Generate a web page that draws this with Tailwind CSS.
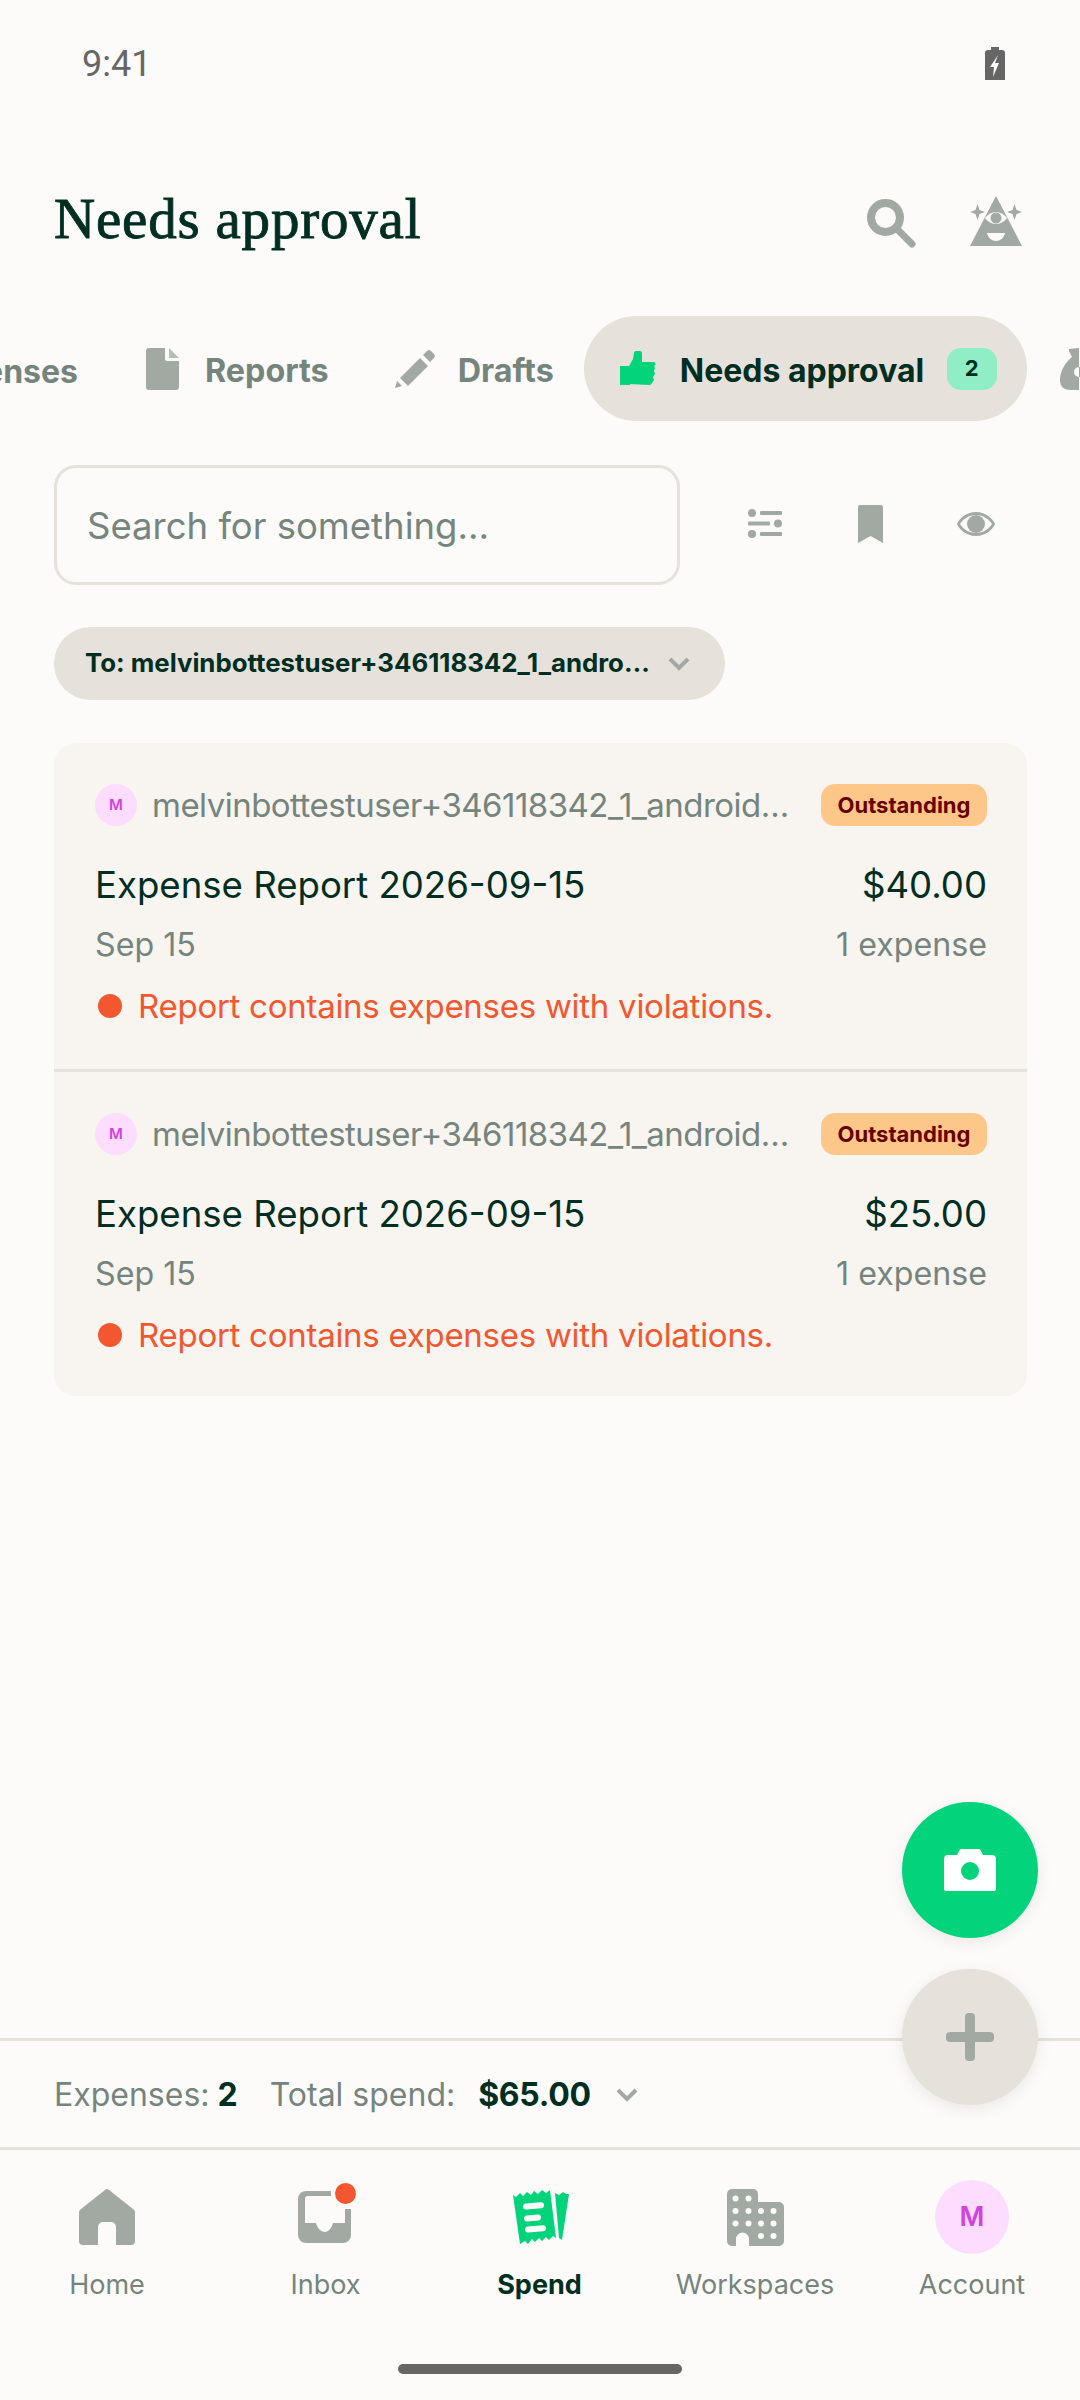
<!DOCTYPE html>
<html lang="en">
<head>
<meta charset="utf-8">
<script src="https://cdn.jsdelivr.net/npm/@tailwindcss/browser@4"></script>
</head>
<body class="bg-[#fcfbf9]">
<div class="relative w-[1080px] h-[2400px] overflow-hidden bg-[#fcfbf9] flex flex-col font-['Inter',sans-serif] text-[#002e22]">

  <!-- status bar -->
  <div class="h-[126px] flex items-start justify-between pl-[82px] pr-[75px] pt-[42px] shrink-0">
    <span class="font-['Roboto',sans-serif] text-[36px] leading-[44px] text-[#666666]">9:41</span>
    <svg class="mt-[5px]" width="20" height="33" viewBox="0 0 20 33"><path d="M6 0h8v3h3a3 3 0 0 1 3 3v27H0V6a3 3 0 0 1 3-3h3z" fill="#666666"/><path d="M13 8 5 20H9L8 30 14 16H10z" fill="#fcfbf9"/></svg>
  </div>

  <!-- header -->
  <div class="h-[190px] shrink-0 flex items-start justify-between pl-[54px] pr-[58px] pt-[62px]">
    <h1 class="font-['Liberation_Serif',serif] font-normal text-[57px] tracking-[0.8px] leading-[62px] text-[#002e22] [-webkit-text-stroke:0.9px_#002e22]">Needs approval</h1>
    <div class="flex items-start gap-[54px] pt-[11px]">
      <svg width="49" height="49" viewBox="0 0 49 49"><circle cx="18.5" cy="18.5" r="14.5" fill="none" stroke="#a2a9a3" stroke-width="8"/><path d="M30 30 45 45" stroke="#a2a9a3" stroke-width="7" stroke-linecap="round"/></svg>
      <svg class="-mt-[3px]" width="52" height="50" viewBox="0 0 52 50"><path d="M26 0 52 50H0z" fill="#a2a9a3"/><path d="M15 22C21 14 31 14 37 22C31 30 21 30 15 22z" fill="#fcfbf9"/><circle cx="26" cy="22" r="5.500" fill="#a2a9a3"/><path d="M17 37h18c-1 5-5 8-9 8s-8-3-9-8z" fill="#fcfbf9"/><path d="M7.500 8 9.500 14 15 16 9.500 18 7.500 24 5.500 18 0 16 5.500 14z" fill="#a2a9a3"/><path d="M44.500 8 46.500 14 52 16 46.500 18 44.500 24 42.500 18 37 16 42.500 14z" fill="#a2a9a3"/></svg>
    </div>
  </div>

  <!-- tabs -->
  <div class="h-[105px] shrink-0 flex items-center relative">
    <div class="absolute left-[-112px] top-[3px] h-[105px] flex items-center text-[#76847e] font-bold text-[32px] whitespace-nowrap">
      <span class="w-[190px] text-right">Expenses</span>
    </div>
    <div class="ml-[146px] flex items-center gap-[26px]">
      <svg width="33" height="42" viewBox="0 0 33 42"><path d="M3 0H19V11a2 2 0 0 0 2 2H33V39a3 3 0 0 1-3 3H3a3 3 0 0 1-3-3V3a3 3 0 0 1 3-3z" fill="#a2a9a3"/><path d="M23 0 33 10H23z" fill="#b6bcb7"/></svg>
      <span class="pt-[4px] font-bold text-[32.300px] leading-[42px] text-[#76847e]">Reports</span>
    </div>
    <div class="ml-[66px] flex items-center gap-[23px]">
      <svg width="40" height="38" viewBox="0 0 40 38"><path d="M5 28 25 8 33 16 13 36z" fill="#a2a9a3"/><path d="M28 5 32 1a3 3 0 0 1 4 0l3 3a3 3 0 0 1 0 4l-4 4z" fill="#a2a9a3"/><path d="M0 38 2 31 7 36z" fill="#a2a9a3"/></svg>
      <span class="pt-[4px] font-bold text-[32.300px] leading-[42px] text-[#76847e]">Drafts</span>
    </div>
    <div class="ml-[30px] h-[105px] w-[443px] shrink-0 rounded-full bg-[#e6e1da] flex items-center pl-[36px]">
      <svg width="36" height="36" viewBox="0 0 36 36"><path d="M0 15H10V34H0z" fill="#03d47c"/><path d="M9 15 13 8 14 2a2.500 2.500 0 0 1 3-2h3a2 2 0 0 1 2 2V11H33a2 2 0 0 1 1 4l1 2-1 3 1 3-2 3 1 3-2 3a3 3 0 0 1-3 2l-20-1z" fill="#03d47c"/></svg>
      <span class="pt-[4px] ml-[24px] w-[245px] font-bold text-[32px] leading-[42px] whitespace-nowrap">Needs approval</span>
      <span class="ml-[22px] w-[50px] h-[42px] rounded-[14px] bg-[#8feec4] flex items-center justify-center font-bold text-[22px]">2</span>
    </div>
    <svg class="ml-[32px] shrink-0" width="44" height="42" viewBox="0 0 44 42"><path fill-rule="evenodd" d="M10 1 20 0V42H12C4 42 1 38 1 32 1 22 7 14 13 9L10 3zM20 19a5 5 0 1 0 0 10 5 5 0 0 0 0-10z" fill="#a2a9a3"/></svg>
  </div>

  <!-- search row -->
  <div class="mt-[44px] shrink-0 flex items-center pl-[54px]">
    <div class="w-[626px] h-[120px] rounded-[22px] border-[3px] border-[#e6e1da] flex items-center pl-[30px] pt-[3px] text-[36.500px] text-[#76847e]">Search for something…</div>
    <div class="ml-[68px] -mt-[3px] flex items-center">
      <svg width="34" height="29" viewBox="0 0 34 29"><g fill="#a2a9a3"><circle cx="4" cy="4" r="4"/><circle cx="30" cy="14.500" r="4"/><circle cx="4" cy="25" r="4"/><rect x="12" y="2" width="22" height="4" rx="1"/><rect x="0" y="12.500" width="22" height="4" rx="1"/><rect x="12" y="23" width="22" height="4" rx="1"/></g></svg>
      <svg class="ml-[76px]" width="25" height="38" viewBox="0 0 25 38"><path d="M2 0H23a2 2 0 0 1 2 2V38L12.500 31 0 38V2a2 2 0 0 1 2-2z" fill="#a2a9a3"/></svg>
      <svg class="ml-[74px]" width="38" height="24" viewBox="0 0 38 24"><path fill-rule="evenodd" d="M19 0C29 0 36 7 38 12 36 17 29 24 19 24S2 17 0 12C2 7 9 0 19 0zM19 3C12 3 6 7 3 12 6 17 12 21 19 21S32 17 35 12C32 7 26 3 19 3z" fill="#a2a9a3"/><circle cx="19" cy="12" r="9" fill="#a2a9a3"/></svg>
    </div>
  </div>

  <!-- filter chip -->
  <div class="mt-[42px] ml-[54px] w-[671px] h-[73px] shrink-0 rounded-full bg-[#e6e1da] flex items-center pl-[31px] font-bold text-[25.800px] whitespace-nowrap">
    <span class="w-[567px]">To: melvinbottestuser+346118342_1_andro…</span>
    <svg class="ml-[16px]" width="22" height="14" viewBox="0 0 22 14"><path d="M2 2 11 11 20 2" fill="none" stroke="#a2a9a3" stroke-width="4"/></svg>
  </div>

  <!-- card -->
  <div class="mt-[43px] ml-[54px] w-[973px] shrink-0 rounded-[22px] bg-[#f8f4f0] overflow-hidden">
    <div class="h-[329px] pl-[41px] pr-[40px] pt-[41px] border-b-[3px] border-[#e6e1da]">
      <div class="flex items-center h-[42px]">
        <div class="w-[42px] h-[42px] rounded-full bg-[#fcdcff] flex items-center justify-center text-[15px] font-semibold text-[#d044dd]">M</div>
        <span class="pt-[2px] ml-[15px] w-[634px] text-[33px] tracking-[-0.53px] text-[#76847e] whitespace-nowrap">melvinbottestuser+346118342_1_android…</span>
        <span class="ml-auto w-[166px] h-[42px] rounded-[14px] bg-[#fec78a] text-[#660000] text-[22px] font-bold flex items-center justify-center">Outstanding</span>
      </div>
      <div class="mt-[36px] flex justify-between text-[36.600px] leading-[46px]"><span>Expense Report 2026-09-15</span><span>$40.00</span></div>
      <div class="mt-[17px] flex justify-between text-[32.200px] leading-[40px] text-[#76847e]"><span>Sep 15</span><span>1 expense</span></div>
      <div class="mt-[20px] flex items-center text-[33px] tracking-[-0.27px] leading-[42px] text-[#f25730]"><span class="ml-[3px] w-[24px] h-[24px] rounded-full bg-[#f25730]"></span><span class="ml-[16px]">Report contains expenses with violations.</span></div>
    </div>
    <div class="h-[324px] pl-[41px] pr-[40px] pt-[41px]">
      <div class="flex items-center h-[42px]">
        <div class="w-[42px] h-[42px] rounded-full bg-[#fcdcff] flex items-center justify-center text-[15px] font-semibold text-[#d044dd]">M</div>
        <span class="pt-[2px] ml-[15px] w-[634px] text-[33px] tracking-[-0.53px] text-[#76847e] whitespace-nowrap">melvinbottestuser+346118342_1_android…</span>
        <span class="ml-auto w-[166px] h-[42px] rounded-[14px] bg-[#fec78a] text-[#660000] text-[22px] font-bold flex items-center justify-center">Outstanding</span>
      </div>
      <div class="mt-[36px] flex justify-between text-[36.600px] leading-[46px]"><span>Expense Report 2026-09-15</span><span>$25.00</span></div>
      <div class="mt-[17px] flex justify-between text-[32.200px] leading-[40px] text-[#76847e]"><span>Sep 15</span><span>1 expense</span></div>
      <div class="mt-[20px] flex items-center text-[33px] tracking-[-0.27px] leading-[42px] text-[#f25730]"><span class="ml-[3px] w-[24px] h-[24px] rounded-full bg-[#f25730]"></span><span class="ml-[16px]">Report contains expenses with violations.</span></div>
    </div>
  </div>

  <div class="flex-1"></div>

  <!-- totals -->
  <div class="h-[109px] shrink-0 border-t-[3px] border-[#e6e1da] flex items-center pl-[54px] pt-[2px] text-[32px] text-[#76847e] whitespace-nowrap">
    <span>Expenses:</span><span class="ml-[8px] font-bold text-[#002e22]">2</span>
    <span class="ml-[32px]">Total spend:</span><span class="ml-[23px] font-bold text-[32px] tracking-[-0.3px] text-[#002e22]">$65.00</span>
    <svg class="ml-[25px]" width="22" height="14" viewBox="0 0 22 14"><path d="M2 2 11 11 20 2" fill="none" stroke="#a2a9a3" stroke-width="4"/></svg>
  </div>

  <!-- nav -->
  <div class="h-[253px] shrink-0 border-t-[3px] border-[#e6e1da] relative">
    <div class="grid grid-cols-[214px_220px_211px_220px_214px] pt-[30px]">
      <div class="flex flex-col items-center">
        <div class="h-[74px] flex items-center">
          <svg width="56" height="56" viewBox="0 0 56 56"><path fill-rule="evenodd" d="M26 1a3 3 0 0 1 4 0L54 20a4 4 0 0 1 2 4V52a4 4 0 0 1-4 4H37V38a5 5 0 0 0-5-5H24a5 5 0 0 0-5 5V56H4a4 4 0 0 1-4-4V24a4 4 0 0 1 2-4z" fill="#a2a9a3"/></svg>
        </div>
        <span class="mt-[14px] text-[27px] leading-[34px] text-[#76847e]">Home</span>
      </div>
      <div class="flex flex-col items-center">
        <div class="h-[74px] flex items-center relative">
          <svg width="53" height="52" viewBox="0 0 53 52"><path d="M33 0H8a8 8 0 0 0-8 8V44a8 8 0 0 0 8 8H45a8 8 0 0 0 8-8V18H47V32H35C34 37 30 41 27 41 23 41 19 37 18 32H7V8a3 3 0 0 1 3-3H33z" fill="#a2a9a3"/></svg>
          <span class="absolute left-[37px] top-[3px] w-[21px] h-[21px] rounded-full bg-[#f25730]"></span>
        </div>
        <span class="ml-[3px] mt-[14px] text-[27px] leading-[34px] text-[#76847e]">Inbox</span>
      </div>
      <div class="flex flex-col items-center">
        <div class="ml-[4px] h-[74px] flex items-center">
          <svg width="57" height="56" viewBox="0 0 57 56"><path d="M0 6 3 8 7 4 10 7 14 3 18 6 21 2 25 5 29 1 33 4 37 1 43 49 40 47 36 51 33 48 29 52 26 49 22 53 19 50 15 55 12 52 7 55z" fill="#03d47c"/><path d="M42 4 46 6 50 3 53 5 56 5 49 51 46 49z" fill="#03d47c"/><g fill="#fcfbf9"><rect x="10" y="14" width="21" height="6" rx="3" transform="rotate(-5 20 17)"/><rect x="11" y="26" width="17" height="6" rx="3" transform="rotate(-5 20 29)"/><rect x="12" y="37" width="21" height="6" rx="3" transform="rotate(-5 22 40)"/></g></svg>
        </div>
        <span class="mt-[14px] text-[27px] leading-[34px] font-bold">Spend</span>
      </div>
      <div class="flex flex-col items-center">
        <div class="h-[74px] flex items-center">
          <svg width="57" height="57" viewBox="0 0 57 57"><path d="M5 0H26a5 5 0 0 1 5 5V13H52a5 5 0 0 1 5 5V52a5 5 0 0 1-5 5H22V50a6 6 0 0 0-13 0V57H5a5 5 0 0 1-5-5V5a5 5 0 0 1 5-5z" fill="#a2a9a3"/><g fill="#fcfbf9"><circle cx="8.500" cy="9.500" r="3"/><circle cx="21.500" cy="9.500" r="3"/><circle cx="8.500" cy="22" r="3"/><circle cx="21.500" cy="22" r="3"/><circle cx="34" cy="22" r="3"/><circle cx="46.500" cy="22" r="3"/><circle cx="8.500" cy="34.500" r="3"/><circle cx="21.500" cy="34.500" r="3"/><circle cx="34" cy="34.500" r="3"/><circle cx="46.500" cy="34.500" r="3"/><circle cx="34" cy="47" r="3"/><circle cx="46.500" cy="47" r="3"/></g></svg>
        </div>
        <span class="mt-[14px] text-[27px] leading-[34px] text-[#76847e]">Workspaces</span>
      </div>
      <div class="flex flex-col items-center">
        <div class="w-[74px] h-[74px] rounded-full bg-[#fcdcff] flex items-center justify-center text-[27px] font-semibold text-[#d044dd]">M</div>
        <span class="mt-[14px] text-[27px] leading-[34px] text-[#76847e]">Account</span>
      </div>
    </div>
    <div class="absolute left-[398px] top-[214px] w-[284px] h-[10px] rounded-full bg-[#666666]"></div>
  </div>

  <!-- floating buttons -->
  <div class="absolute left-[902px] top-[1802px] w-[136px] h-[136px] rounded-full bg-[#03d47c] shadow-[0_4px_16px_rgba(0,0,0,0.08)] flex items-center justify-center">
    <svg width="52" height="42" viewBox="0 0 52 42"><path fill-rule="evenodd" d="M18 0H34a3 3 0 0 1 3 2L39 6H48a4 4 0 0 1 4 4V40a2 2 0 0 1-2 2H2a2 2 0 0 1-2-2V10a4 4 0 0 1 4-4H13L15 2a3 3 0 0 1 3-2zM26 13a9 9 0 1 0 0 18 9 9 0 0 0 0-18z" fill="#ffffff"/></svg>
  </div>
  <div class="absolute left-[902px] top-[1969px] w-[136px] h-[136px] rounded-full bg-[#e6e1da] shadow-[0_4px_16px_rgba(0,0,0,0.08)] flex items-center justify-center">
    <svg width="48" height="48" viewBox="0 0 48 48"><rect x="0" y="19" width="48" height="10" rx="4" fill="#a2a9a3"/><rect x="19" y="0" width="10" height="48" rx="4" fill="#a2a9a3"/></svg>
  </div>
</div>
</body>
</html>
